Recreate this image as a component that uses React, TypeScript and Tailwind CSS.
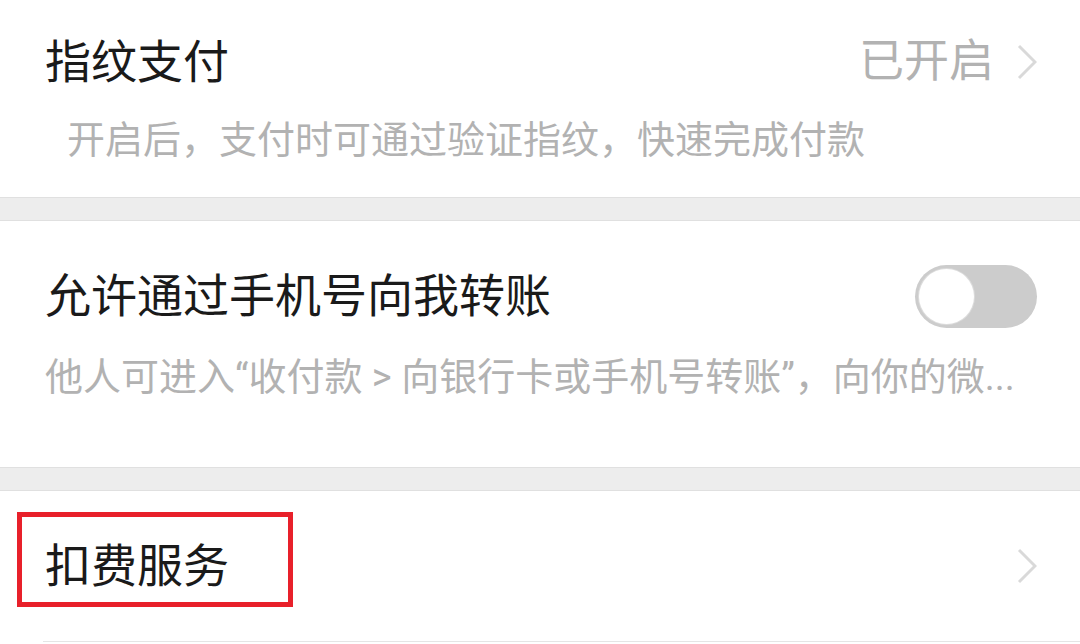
import React from "react";

const FONT = 'Roboto, "Noto Sans CJK SC", sans-serif';

function Chevron() {
  return (
    <svg width="20" height="36" viewBox="0 0 20 36" fill="none" className="shrink-0">
      <polyline points="2,2 18,18 2,34" stroke="#d9d9d9" strokeWidth="3" strokeLinejoin="miter" />
    </svg>
  );
}

function Toggle() {
  return (
    <div className="w-[122px] h-[63px] rounded-full bg-[#cccccc] p-[4px] flex items-center shrink-0">
      <div className="w-[55px] h-[55px] rounded-full bg-white ring-1 ring-[#dcdcdc]" />
    </div>
  );
}

function Band() {
  return <div className="h-[24px] bg-[#ededed] border-y border-[#e0e0e0]" />;
}

export default function App() {
  return (
    <div
      className="w-[1080px] h-[644px] overflow-hidden bg-white flex flex-col"
      style={{ fontFamily: FONT }}
    >
      {/* 指纹支付 */}
      <div className="h-[197px] flex flex-col pl-[45px] pr-[43px]">
        <div className="mt-[40px] h-[44px] flex items-center justify-between">
          <span className="text-[46px] leading-[44px] text-[#1a1a1a]">指纹支付</span>
          <div className="flex items-center gap-[23px]">
            <span className="text-[45px] leading-[44px] text-[#b2b2b2]">已开启</span>
            <Chevron />
          </div>
        </div>
        <div className="mt-[38px] h-[36px] pl-[22px] text-[38px] leading-[36px] text-[#b2b2b2] whitespace-nowrap">
          开启后，支付时可通过验证指纹，快速完成付款
        </div>
      </div>

      <Band />

      {/* 允许通过手机号向我转账 */}
      <div className="h-[246px] flex flex-col pl-[45px] pr-[43px]">
        <div className="mt-[43px] h-[64px] flex items-center justify-between">
          <span className="text-[46px] leading-[44px] text-[#1a1a1a]">允许通过手机号向我转账</span>
          <Toggle />
        </div>
        <div className="mt-[31px] h-[36px] text-[38px] leading-[36px] text-[#b2b2b2] whitespace-nowrap">
          他人可进入“收付款 &gt; 向银行卡或手机号转账”，向你的微...
        </div>
      </div>

      <Band />

      {/* 扣费服务 */}
      <div className="relative flex-1 flex flex-col">
        <div className="h-[150px] flex items-center justify-between pl-[45px] pr-[43px]">
          <span className="text-[46px] leading-[44px] text-[#1a1a1a]">扣费服务</span>
          <Chevron />
        </div>
        <div className="ml-[43px] h-px bg-[#e5e5e5]" />
        <div className="absolute left-[17px] top-[21px] w-[276px] h-[95px] border-[5px] border-[#e8202a]" />
      </div>
    </div>
  );
}
